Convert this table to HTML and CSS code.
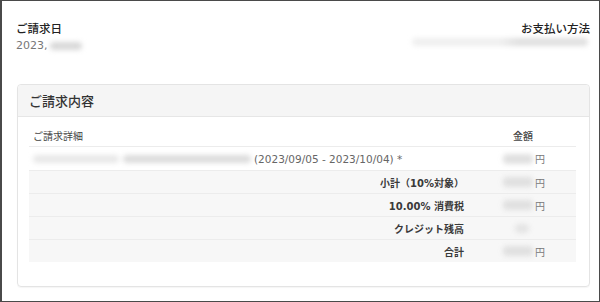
FILE: index.html
```html
<!DOCTYPE html>
<html lang="ja">
<head>
<meta charset="utf-8">
<link rel="stylesheet" href="styles.css">
</head>
<body>
<div class="frame">
  <div class="top">
    <div class="info">
      <div class="label">ご請求日</div>
      <div class="value">2023,<span class="blur blur-date"></span></div>
    </div>
    <div class="info info-right">
      <div class="label">お支払い方法</div>
      <div class="value"><span class="blur blur-pay"></span></div>
    </div>
  </div>
  <div class="card">
    <div class="card-header">ご請求内容</div>
    <div class="card-body">
      <div class="table">
        <div class="row head">
          <div class="cell desc">ご請求詳細</div>
          <div class="cell amt-head">金額</div>
        </div>
        <div class="row">
          <div class="cell desc"><span class="blur blur-item1"></span><span class="blur blur-item2"></span><span class="period">(2023/09/05 - 2023/10/04) *</span></div>
          <div class="cell amt"><span class="blur blur-amt"></span><span class="yen">円</span></div>
        </div>
        <div class="row sum">
          <div class="cell lbl">小計（10%対象）</div>
          <div class="cell amt"><span class="blur blur-amt"></span><span class="yen">円</span></div>
        </div>
        <div class="row sum">
          <div class="cell lbl">10.00% 消費税</div>
          <div class="cell amt"><span class="blur blur-amt"></span><span class="yen">円</span></div>
        </div>
        <div class="row sum">
          <div class="cell lbl">クレジット残高</div>
          <div class="cell amt"><span class="blur blur-small"></span><span class="yen hidden">円</span></div>
        </div>
        <div class="row sum">
          <div class="cell lbl">合計</div>
          <div class="cell amt"><span class="blur blur-amt"></span><span class="yen">円</span></div>
        </div>
      </div>
    </div>
  </div>
</div>
</body>
</html>
```
FILE: styles.css
```css
* { box-sizing: border-box; }
html, body { margin: 0; padding: 0; background: #fff; }
body {
  font-family: "DejaVu Sans", "Noto Sans CJK JP", sans-serif;
  color: #333;
}
.frame {
  width: 600px;
  height: 302px;
  border: 1px solid #4a4a4a;
  border-left-width: 2px;
  padding: 19px 9px 0 14px;
  overflow: hidden;
}
.top {
  display: flex;
  justify-content: space-between;
}
.info-right { text-align: right; }
.label {
  font-family: "Noto Sans CJK JP", sans-serif;
  font-size: 11.5px;
  line-height: 16px;
  font-weight: 500;
  color: #222;
}
.value {
  font-size: 11px;
  line-height: 16px;
  margin-top: 2px;
  color: #777;
  display: flex;
  align-items: center;
}
.blur {
  display: inline-block;
  height: 8px;
  border-radius: 4px;
  background: #d6d6d6;
  filter: blur(2.5px);
}
.blur-date { width: 32px; margin-left: 2px; background: #d8d8d8; }
.blur-pay { width: 176px; margin-left: auto; margin-right: 2px; background: linear-gradient(90deg, #efefef 0%, #efefef 50%, #e0e0e0 60%, #e0e0e0 100%); }
.card {
  margin: 30px 0 0 1px;
  border: 1px solid #e4e4e4;
  border-radius: 4px;
  box-shadow: 0 1px 1px rgba(0,0,0,0.04);
}
.card-header {
  height: 32px;
  line-height: 31px;
  background: #f5f5f5;
  border-bottom: 1px solid #e6e6e6;
  padding-left: 11px;
  font-family: "Noto Sans CJK JP", sans-serif;
  font-size: 13px;
  font-weight: 500;
  color: #333;
  border-radius: 4px 4px 0 0;
}
.card-body {
  padding: 7px 13px 24px 11px;
}
.table {
  font-size: 10px;
}
.row {
  display: grid;
  grid-template-columns: 1fr 104px;
  height: 23px;
  align-items: center;
  border-top: 1px solid #ececec;
}
.row.head { border-top: none; border-bottom: 1px solid #ececec; height: 23px; }
.row.head + .row { border-top: none; }
.row.sum { background: #f7f7f7; }
.cell { height: 100%; display: flex; align-items: center; }
.desc { padding-left: 4px; color: #444; }
.lbl { justify-content: flex-end; padding-right: 8px; font-weight: bold; color: #3a3a3a; }
.amt-head { padding-left: 41px; font-weight: 500; color: #444; }
.amt { padding-left: 31px; }
.period { font-size: 10.5px; color: #666; margin-left: 3px; }
.blur-item1 { width: 86px; background: #e8e8e8; }
.blur-item2 { width: 128px; margin-left: 4px; background: #dcdcdc; }
.blur-amt { width: 30px; height: 10px; background: #e0e0e0; }
.blur-small { width: 14px; height: 9px; margin-left: 12px; background: #e4e4e4; }
.yen { color: #777; margin-left: 2px; }
.hidden { visibility: hidden; }
```
